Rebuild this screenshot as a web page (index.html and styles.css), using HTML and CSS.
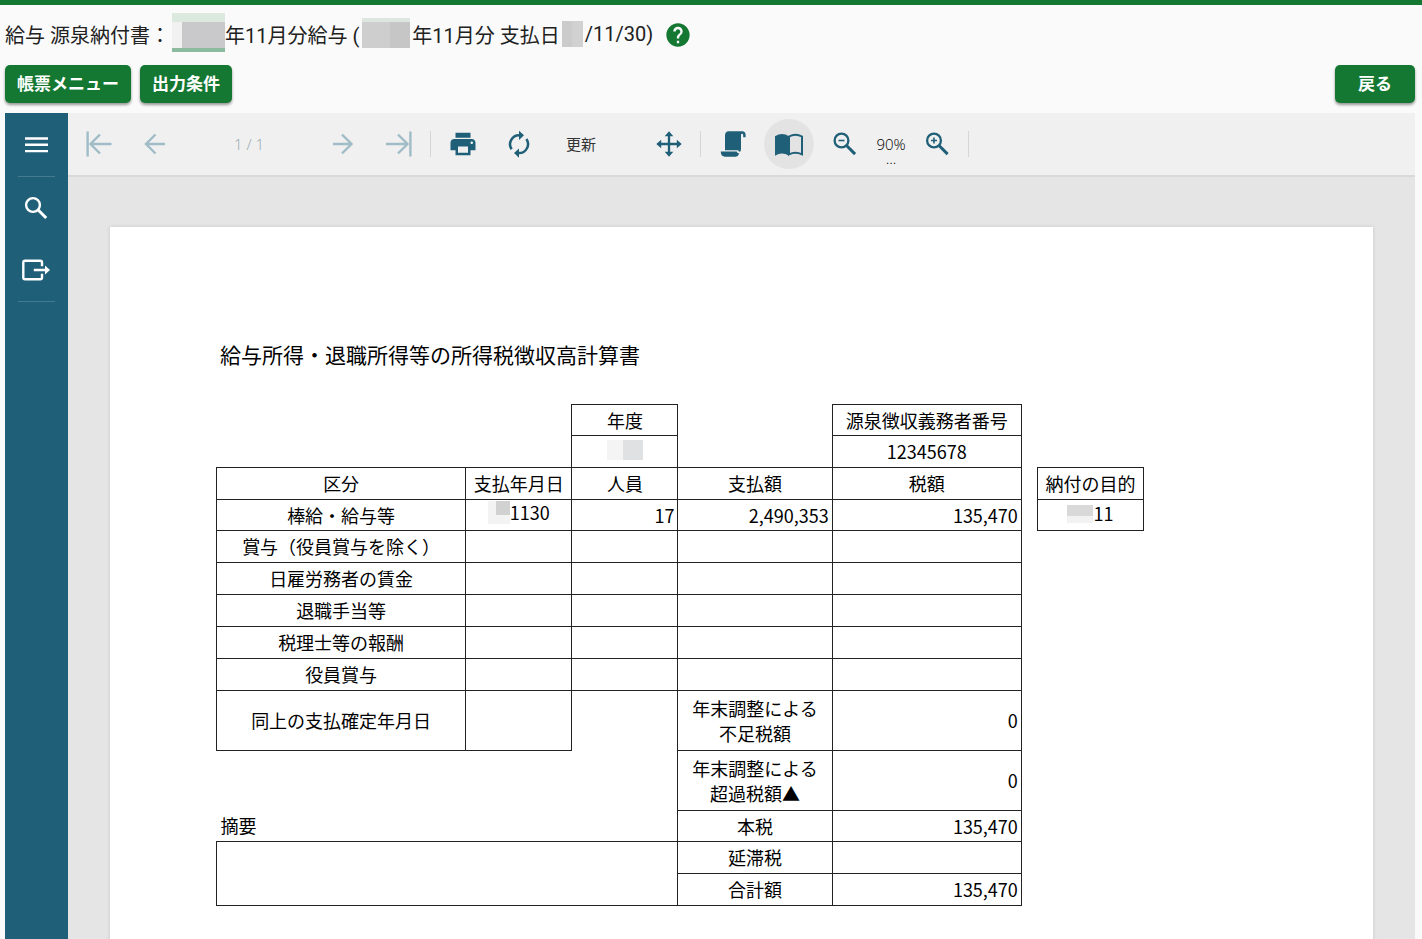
FILE: index.html
```html
<!DOCTYPE html>
<html lang="ja">
<head>
<meta charset="utf-8">
<meta name="viewport" content="width=device-width, initial-scale=1">
<title>給与 源泉納付書</title>
<link rel="stylesheet" href="styles.css">
</head>
<body>
<header class="header">
  <div class="title-row">
    <h1 class="title"><span>給与 源泉納付書：</span><span class="mask mask-period"></span><span>年11月分給与 (</span><span class="mask mask-year"></span><span>年11月分 支払日</span><span class="mask mask-paid"></span><span>/11/30)</span></h1>
    <button class="help" type="button" aria-label="ヘルプ">
      <svg width="28" height="28" viewBox="0 0 24 24" fill="currentColor"><path d="M12 2C6.48 2 2 6.48 2 12s4.48 10 10 10 10-4.48 10-10S17.52 2 12 2zm1 17h-2v-2h2v2zm2.07-7.75l-.9.92C13.45 12.9 13 13.5 13 15h-2v-.5c0-1.1.45-2.1 1.17-2.83l1.24-1.26c.37-.36.59-.86.59-1.41 0-1.1-.9-2-2-2s-2 .9-2 2H8c0-2.21 1.79-4 4-4s4 1.79 4 4c0 .88-.36 1.68-.93 2.25z"/></svg>
    </button>
  </div>
  <div class="actions">
    <button class="btn" type="button">帳票メニュー</button>
    <button class="btn" type="button">出力条件</button>
    <button class="btn btn-back" type="button">戻る</button>
  </div>
</header>

<main class="viewer">
  <nav class="sidebar" aria-label="ビューアー">
    <button class="side-btn" type="button" aria-label="メニュー">
      <svg width="32" height="32" viewBox="0 0 32 32" fill="none" stroke="currentColor" stroke-width="2.4"><path d="M4 9.500h23M4 15.800h23M4 22.100h23"/></svg>
    </button>
    <div class="side-group">
      <button class="side-btn" type="button" aria-label="検索">
        <svg width="32" height="32" viewBox="0 0 32 32" fill="none" stroke="currentColor"><circle cx="12" cy="13" r="6.900" stroke-width="2.400"/><path d="M17.200 18l8 8" stroke-width="3"/></svg>
      </button>
      <button class="side-btn" type="button" aria-label="エクスポート">
        <svg width="32" height="32" viewBox="0 0 32 32" fill="none" stroke="currentColor" stroke-width="2.400"><path d="M21 12.300V8.500q0-1.700-1.700-1.700H4Q2.300 6.800 2.300 8.500v15q0 1.700 1.700 1.700h15.300q1.700 0 1.700-1.700v-3.800M12.800 16H25"/><path d="M24 11.500l5 4.500-5 4.500z" fill="currentColor" stroke="none"/></svg>
      </button>
    </div>
  </nav>

  <section class="stage">
    <div class="toolbar" role="toolbar" aria-label="帳票ツール">
      <button class="tool" type="button" disabled aria-label="最初のページ"><svg width="32" height="32" viewBox="0 0 32 32" fill="none" stroke="currentColor" stroke-width="2.400"><path d="M4.600 3.500v25M28.500 16H7.500M17 6.500L7.500 16l9.500 9.500"/></svg></button>
      <button class="tool" type="button" disabled aria-label="前のページ"><svg width="32" height="32" viewBox="0 0 32 32" fill="none" stroke="currentColor" stroke-width="2.400"><path d="M26 16H7.500M16.500 6.500L7 16l9.500 9.500"/></svg></button>
      <input class="page-no" type="text" value="1 / 1" aria-label="ページ" disabled>
      <button class="tool" type="button" disabled aria-label="次のページ"><svg width="32" height="32" viewBox="0 0 32 32" fill="none" stroke="currentColor" stroke-width="2.400"><path d="M6 16h18.500M15 6.500l9.500 9.500-9.500 9.500"/></svg></button>
      <button class="tool" type="button" disabled aria-label="最後のページ"><svg width="32" height="32" viewBox="0 0 32 32" fill="none" stroke="currentColor" stroke-width="2.400"><path d="M27.400 3.500v25M3 16h21.500M15 6.500l9.500 9.500-9.500 9.500"/></svg></button>
      <span class="sep"></span>
      <button class="tool" type="button" aria-label="印刷"><svg width="30" height="30" viewBox="0 0 24 24" fill="currentColor"><path d="M19 8H5c-1.660 0-3 1.340-3 3v6h4v4h12v-4h4v-6c0-1.660-1.340-3-3-3zm-3 11H8v-5h8v5zm3-7c-.55 0-1-.45-1-1s.45-1 1-1 1 .45 1 1-.45 1-1 1zm-1-9H6v4h12V3z"/></svg></button>
      <button class="tool" type="button" aria-label="再読み込み"><svg width="32" height="32" viewBox="0 0 32 32"><path d="M16.500 7.300A9 9 0 0 0 8.600 21.300M15.500 25.100A9 9 0 0 0 23.400 11" fill="none" stroke="currentColor" stroke-width="2.500"/><path d="M16 2.700l5 4.600-5 4.600zM16 29.700l-5-4.600 5-4.600z" fill="currentColor"/></svg></button>
      <button class="refresh-text" type="button">更新</button>
      <button class="tool" type="button" aria-label="移動"><svg width="32" height="32" viewBox="0 0 32 32"><path d="M16 7v18M7 16h18" stroke="currentColor" stroke-width="2.300"/><path d="M16 3.300l4.300 4.900h-8.600zM16 28.700l4.300-4.900h-8.600zM3.300 16l4.900-4.300v8.600zM28.700 16l-4.900-4.300v8.600z" fill="currentColor"/></svg></button>
      <span class="sep"></span>
      <button class="tool" type="button" aria-label="連続表示"><svg width="32" height="32" viewBox="0 0 32 32" fill="currentColor"><path d="M8 22.300V7.800q0-4.500 3.700-4.500h13.500q3.400.2 3.400 3.400v2.600h-2.400V7.100q0-1.400-1.100-1.400T24 7.100v13.400q0 2.500-1 3.200-1.600 0-2-1.400z"/><path d="M3.700 23.500h16q.6 1.800 2.600 2-1.200 3.200-3.500 3.200H8q-4 0-4.300-5.200z"/></svg></button>
      <button class="tool tool-active" type="button" aria-label="ページ表示" aria-pressed="true"><svg width="32" height="32" viewBox="0 0 32 32"><path d="M2 8.200q7-4.400 14 0v19.500q-7-4.400-14 0z" fill="currentColor"/><path d="M16 8.500q6.500-3.600 13 0v17.800q-6.500-3-13 0z" fill="none" stroke="currentColor" stroke-width="2"/></svg></button>
      <button class="tool" type="button" aria-label="縮小"><svg width="32" height="32" viewBox="0 0 32 32" fill="none" stroke="currentColor"><circle cx="12.500" cy="12.500" r="6.900" stroke-width="2.300"/><path d="M9.500 12.500h6" stroke-width="1.600"/><path d="M17.500 17.500l8.600 8.600" stroke-width="3"/></svg></button>
      <button class="zoom-level" type="button" aria-label="90% 倍率"><span>90%</span><span>...</span></button>
      <button class="tool" type="button" aria-label="拡大"><svg width="32" height="32" viewBox="0 0 32 32" fill="none" stroke="currentColor"><circle cx="13" cy="12.500" r="6.900" stroke-width="2.300"/><path d="M10 12.500h6M13 9.500v6" stroke-width="1.600"/><path d="M18 17.500l8.600 8.600" stroke-width="3"/></svg></button>
      <span class="sep"></span>
    </div>

    <div class="canvas">
      <article class="paper">
        <h2 class="doc-title">給与所得・退職所得等の所得税徴収高計算書</h2>
        <table class="report">
          <colgroup><col class="c-kind"><col class="c-mid"><col class="c-mid"><col class="c-pay"><col class="c-tax"><col class="c-gap"><col class="c-mid"></colgroup>
          <tbody>
            <tr class="snug"><td colspan="2"></td><th class="b" scope="col">年度</th><td></td><th class="b" scope="col">源泉徴収義務者番号</th><td colspan="2"></td></tr>
            <tr><td colspan="2"></td><td class="b"><span class="mask mask-fy"></span></td><td></td><td class="b">12345678</td><td colspan="2"></td></tr>
            <tr><th class="b" scope="col">区分</th><th class="b" scope="col">支払年月日</th><th class="b" scope="col">人員</th><th class="b" scope="col">支払額</th><th class="b" scope="col">税額</th><td></td><th class="b" scope="col">納付の目的</th></tr>
            <tr class="snug"><th class="b" scope="row">棒給・給与等</th><td class="b"><span class="mask mask-date"></span>1130</td><td class="b num">17</td><td class="b num">2,490,353</td><td class="b num">135,470</td><td></td><td class="b"><span class="mask mask-goal"></span>11</td></tr>
            <tr><th class="b" scope="row">賞与（役員賞与を除く）</th><td class="b"></td><td class="b"></td><td class="b"></td><td class="b"></td><td colspan="2"></td></tr>
            <tr><th class="b" scope="row">日雇労務者の賃金</th><td class="b"></td><td class="b"></td><td class="b"></td><td class="b"></td><td colspan="2"></td></tr>
            <tr><th class="b" scope="row">退職手当等</th><td class="b"></td><td class="b"></td><td class="b"></td><td class="b"></td><td colspan="2"></td></tr>
            <tr><th class="b" scope="row">税理士等の報酬</th><td class="b"></td><td class="b"></td><td class="b"></td><td class="b"></td><td colspan="2"></td></tr>
            <tr><th class="b" scope="row">役員賞与</th><td class="b"></td><td class="b"></td><td class="b"></td><td class="b"></td><td colspan="2"></td></tr>
            <tr class="tall"><th class="b" scope="row">同上の支払確定年月日</th><td class="b"></td><td></td><th class="b" scope="row">年末調整による<br>不足税額</th><td class="b num">0</td><td colspan="2"></td></tr>
            <tr class="tall"><td colspan="3"></td><th class="b" scope="row">年末調整による<br>超過税額▲</th><td class="b num">0</td><td colspan="2"></td></tr>
            <tr class="snug"><th class="note" colspan="3">摘要</th><th class="b" scope="row">本税</th><td class="b num">135,470</td><td colspan="2"></td></tr>
            <tr><td class="b" colspan="3" rowspan="2"></td><th class="b" scope="row">延滞税</th><td class="b"></td><td colspan="2"></td></tr>
            <tr><th class="b" scope="row">合計額</th><td class="b num">135,470</td><td colspan="2"></td></tr>
          </tbody>
        </table>
      </article>
    </div>
  </section>
</main>
</body>
</html>
```

FILE: styles.css
```css
* { box-sizing: border-box; }

body {
  margin: 0;
  height: 100vh;
  display: flex;
  flex-direction: column;
  border-top: 5px solid #147832;
  background: #fafafa;
  color: #212121;
  font-family: Roboto, "Noto Sans CJK JP", sans-serif;
}

button, input {
  margin: 0;
  padding: 0;
  border: 0;
  background: none;
  font: inherit;
  color: inherit;
}

svg { display: block; }

/* header */
.header { padding: 0 7px 10px 5px; }
.title-row { display: flex; align-items: center; height: 60px; gap: 11px; }
.title {
  display: flex;
  align-items: center;
  height: 60px;
  margin: 0;
  padding-bottom: 2px;
  font-size: 20px;
  font-weight: 400;
  white-space: nowrap;
}
.help { color: #147832; }

.mask { display: inline-block; flex: none; vertical-align: middle; }
.mask-period {
  width: 53px;
  height: 39px;
  margin: 0 0 3px 2px;
  background:
    linear-gradient(#dbe9df, #dbe9df) 0 0 / 100% 9px no-repeat,
    linear-gradient(#8cba9e, #8cba9e) 0 100% / 100% 4px no-repeat,
    linear-gradient(90deg, #f1f1f1 10px, #c9c8ca 10px);
}
.mask-year {
  width: 48px;
  height: 30px;
  margin: 0 2px 2px 3px;
  background:
    linear-gradient(#dde7e0, #dde7e0) 0 0 / 100% 4px no-repeat,
    linear-gradient(90deg, #cecece 28px, #c6c6c6 28px);
}
.mask-paid {
  width: 21px;
  height: 26px;
  margin: 0 2px;
  background: linear-gradient(90deg, #cbcbcb 10px, #d1d1d1 10px);
}

.actions { display: flex; gap: 9px; }
.btn {
  height: 38px;
  padding: 0 12px 4px;
  border-radius: 5px;
  background: #147832;
  box-shadow: 0 2px 3px rgba(0, 0, 0, .4);
  color: #fff;
  font-size: 17px;
  font-weight: 700;
}
.btn-back { min-width: 80px; margin-left: auto; }

/* viewer */
.viewer {
  flex: 1;
  min-height: 0;
  display: flex;
  margin: 0 7px 0 5px;
}
.sidebar { flex: none; width: 63px; background: #205f78; color: #fff; }
.side-btn {
  display: flex;
  align-items: center;
  justify-content: center;
  width: 100%;
  height: 63px;
}
.side-group {
  margin: 0 13px;
  border: solid #447a8f;
  border-width: 1px 0;
}
.side-group .side-btn { height: 62px; }

.stage {
  flex: 1;
  min-width: 0;
  display: flex;
  flex-direction: column;
  background: #e5e5e5;
}
.toolbar {
  flex: none;
  display: flex;
  align-items: center;
  height: 64px;
  padding: 0 3px;
  border-bottom: 2px solid #d9d9d9;
  background: #f0f0f0;
  color: #205f78;
  font-family: "Open Sans", "Noto Sans CJK JP", sans-serif;
  font-size: 15px;
}
.tool {
  flex: none;
  display: flex;
  align-items: center;
  justify-content: center;
  width: 56px;
  height: 50px;
}
.tool:disabled { color: #a0bcc6; }
.tool-active { width: 50px; margin: 0 3px; border-radius: 50%; background: #e3e3e3; }
.page-no { width: 132px; color: #94a5ac; font-weight: 300; text-align: center; }
.sep { flex: none; width: 1px; height: 26px; margin: 0 4px 0 3px; background: #d6d6d6; }
.refresh-text { width: 94px; padding: 0 0 2px 19px; color: #333; text-align: left; }
.zoom-level {
  align-self: flex-start;
  display: flex;
  flex-direction: column;
  align-items: center;
  width: 36px;
  padding-top: 24px;
  color: #000;
  font-weight: 300;
  line-height: 14px;
}

.canvas {
  flex: 1;
  min-height: 0;
  padding: 50px 42px 0;
  overflow: auto;
  scrollbar-width: none;
}
.paper {
  min-height: 893px;
  padding: 111px 106px 60px;
  background: #fff;
  box-shadow: 0 0 4px rgba(0, 0, 0, .12);
  color: #000;
  font-family: "Noto Sans CJK JP", sans-serif;
}
.doc-title {
  margin: 0 0 34px;
  padding-left: 4px;
  font-size: 21px;
  font-weight: 400;
  line-height: 32px;
}

/* report table */
.report {
  width: 928px;
  table-layout: fixed;
  border-collapse: collapse;
  font-size: 18px;
  line-height: 25px;
}
.report tr { height: 32px; }
.report .snug { height: 31px; }
.report .tall { height: 60px; }
.report th, .report td {
  padding: 0;
  font-weight: 400;
  text-align: center;
  white-space: nowrap;
}
.report .b { border: 1px solid #222; }
.report .num { padding-right: 3px; text-align: right; }
.report .note { padding-left: 4px; text-align: left; }
.c-kind { width: 249px; }
.c-mid { width: 106px; }
.c-pay { width: 154px; }
.c-tax { width: 189px; }
.c-gap { width: 16px; }

.mask-fy {
  width: 36px;
  height: 20px;
  margin-bottom: 6px;
  background: linear-gradient(90deg, #f5f4f4 16px, #e0e1e3 16px);
}
.mask-date {
  width: 22px;
  height: 23px;
  margin-bottom: 6px;
  background:
    linear-gradient(#d2d1d2, #d2d1d2) 100% 0 / 14px 14px no-repeat,
    #f3f3f3;
}
.mask-goal {
  width: 26px;
  height: 18px;
  margin-bottom: 6px;
  background: linear-gradient(#d9d9d9 11px, #f2f2f2 11px);
}
```
